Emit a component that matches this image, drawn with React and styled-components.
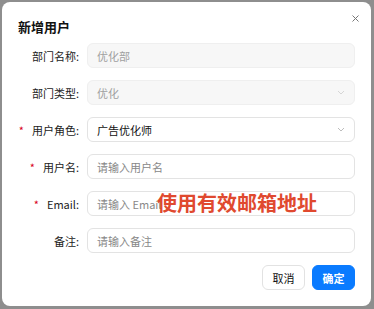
import React from 'react'
import styled, { createGlobalStyle } from 'styled-components'

const Global = createGlobalStyle`
    html, body {
        margin: 0;
        padding: 0;
        background: #8e8e8e;
        font-family: "Noto Sans CJK SC", "Noto Sans", sans-serif;
    }
`;

const Backdrop = styled.div`
    width: 374px;
    height: 309px;
    box-sizing: border-box;
    padding: 2px 3px 3px 2px;
`;

const Modal = styled.section`
    position: relative;
    height: 100%;
    box-sizing: border-box;
    background: #fff;
    border-radius: 8px;
    padding: 14px 16px 16px 16px;
    display: flex;
    flex-direction: column;
`;

const Header = styled.header`
    display: flex;
    justify-content: space-between;
    align-items: center;
    height: 20px;
    margin-bottom: 7px;
`;

const Title = styled.h2`
    margin: 0;
    font-size: 13px;
    font-weight: 700;
    color: #111;
`;

const Close = styled.button`
    background: none;
    border: none;
    padding: 0;
    width: 12px;
    height: 12px;
    margin-top: -15px;
    margin-right: -6px;
    display: flex;
    align-items: center;
    justify-content: center;
    cursor: pointer;
`;

const Form = styled.div`
    display: flex;
    flex-direction: column;
    gap: 12px;
`;

const Row = styled.div`
    position: relative;
    display: grid;
    grid-template-columns: 61px 1fr;
    column-gap: 8px;
    align-items: center;
    height: 25px;
`;

const Label = styled.label`
    text-align: right;
    font-size: 11px;
    color: #222;
    white-space: nowrap;
`;

const Star = styled.span`
    color: #d8001b;
    margin-right: 8px;
`;

const Field = styled.div`
    height: 25px;
    box-sizing: border-box;
    border: 1px solid ${p => (p.$disabled ? '#efefef' : '#e3e3e3')};
    background: ${p => (p.$disabled ? '#f7f7f7' : '#fff')};
    border-radius: 6px;
    padding: 0 9px;
    display: flex;
    align-items: center;
    justify-content: space-between;
    font-size: 11px;
    color: ${p => (p.$disabled ? '#a0a0a0' : p.$placeholder ? '#888' : '#111')};
`;

const Hint = styled.div`
    position: absolute;
    left: 139px;
    top: -3px;
    font-size: 20px;
    font-weight: 700;
    color: #e0492f;
    white-space: nowrap;
`;

const Footer = styled.footer`
    display: flex;
    justify-content: flex-end;
    gap: 7px;
    margin-top: 12px;
`;

const Button = styled.button`
    width: 43px;
    height: 25px;
    border-radius: 6px;
    font-family: inherit;
    font-size: 11px;
    padding: 0;
    cursor: pointer;
    border: 1px solid ${p => (p.$primary ? '#0a7bff' : '#e2e2e2')};
    background: ${p => (p.$primary ? '#0a7bff' : '#fff')};
    color: ${p => (p.$primary ? '#fff' : '#111')};
    font-weight: ${p => (p.$primary ? 700 : 400)};
`;

const Chevron = ({ light }) => (
    <svg width="8" height="5" viewBox="0 0 8 5" fill="none">
        <path d="M1 1l3 3 3-3" stroke={light ? '#d6d6d6' : '#bdbdbd'} strokeWidth="1" />
    </svg>
);

const FormRow = ({ label, required, children, hint }) => (
    <Row>
        <Label>{required && <Star>*</Star>}{label}:</Label>
        {children}
        {hint && <Hint>{hint}</Hint>}
    </Row>
);

export default function App() {
    return (
        <Backdrop>
            <Global />
            <Modal>
                <Header>
                    <Title>新增用户</Title>
                    <Close aria-label="close">
                        <svg width="7" height="7" viewBox="0 0 7 7">
                            <path d="M0.5 0.5l6 6M6.5 0.5l-6 6" stroke="#777" strokeWidth="1" />
                        </svg>
                    </Close>
                </Header>
                <Form>
                    <FormRow label="部门名称">
                        <Field $disabled>优化部</Field>
                    </FormRow>
                    <FormRow label="部门类型">
                        <Field $disabled>优化<Chevron light /></Field>
                    </FormRow>
                    <FormRow label="用户角色" required>
                        <Field>广告优化师<Chevron /></Field>
                    </FormRow>
                    <FormRow label="用户名" required>
                        <Field $placeholder>请输入用户名</Field>
                    </FormRow>
                    <FormRow label="Email" required hint="使用有效邮箱地址">
                        <Field $placeholder>请输入 Email</Field>
                    </FormRow>
                    <FormRow label="备注">
                        <Field $placeholder>请输入备注</Field>
                    </FormRow>
                </Form>
                <Footer>
                    <Button>取消</Button>
                    <Button $primary>确定</Button>
                </Footer>
            </Modal>
        </Backdrop>
    )
}
